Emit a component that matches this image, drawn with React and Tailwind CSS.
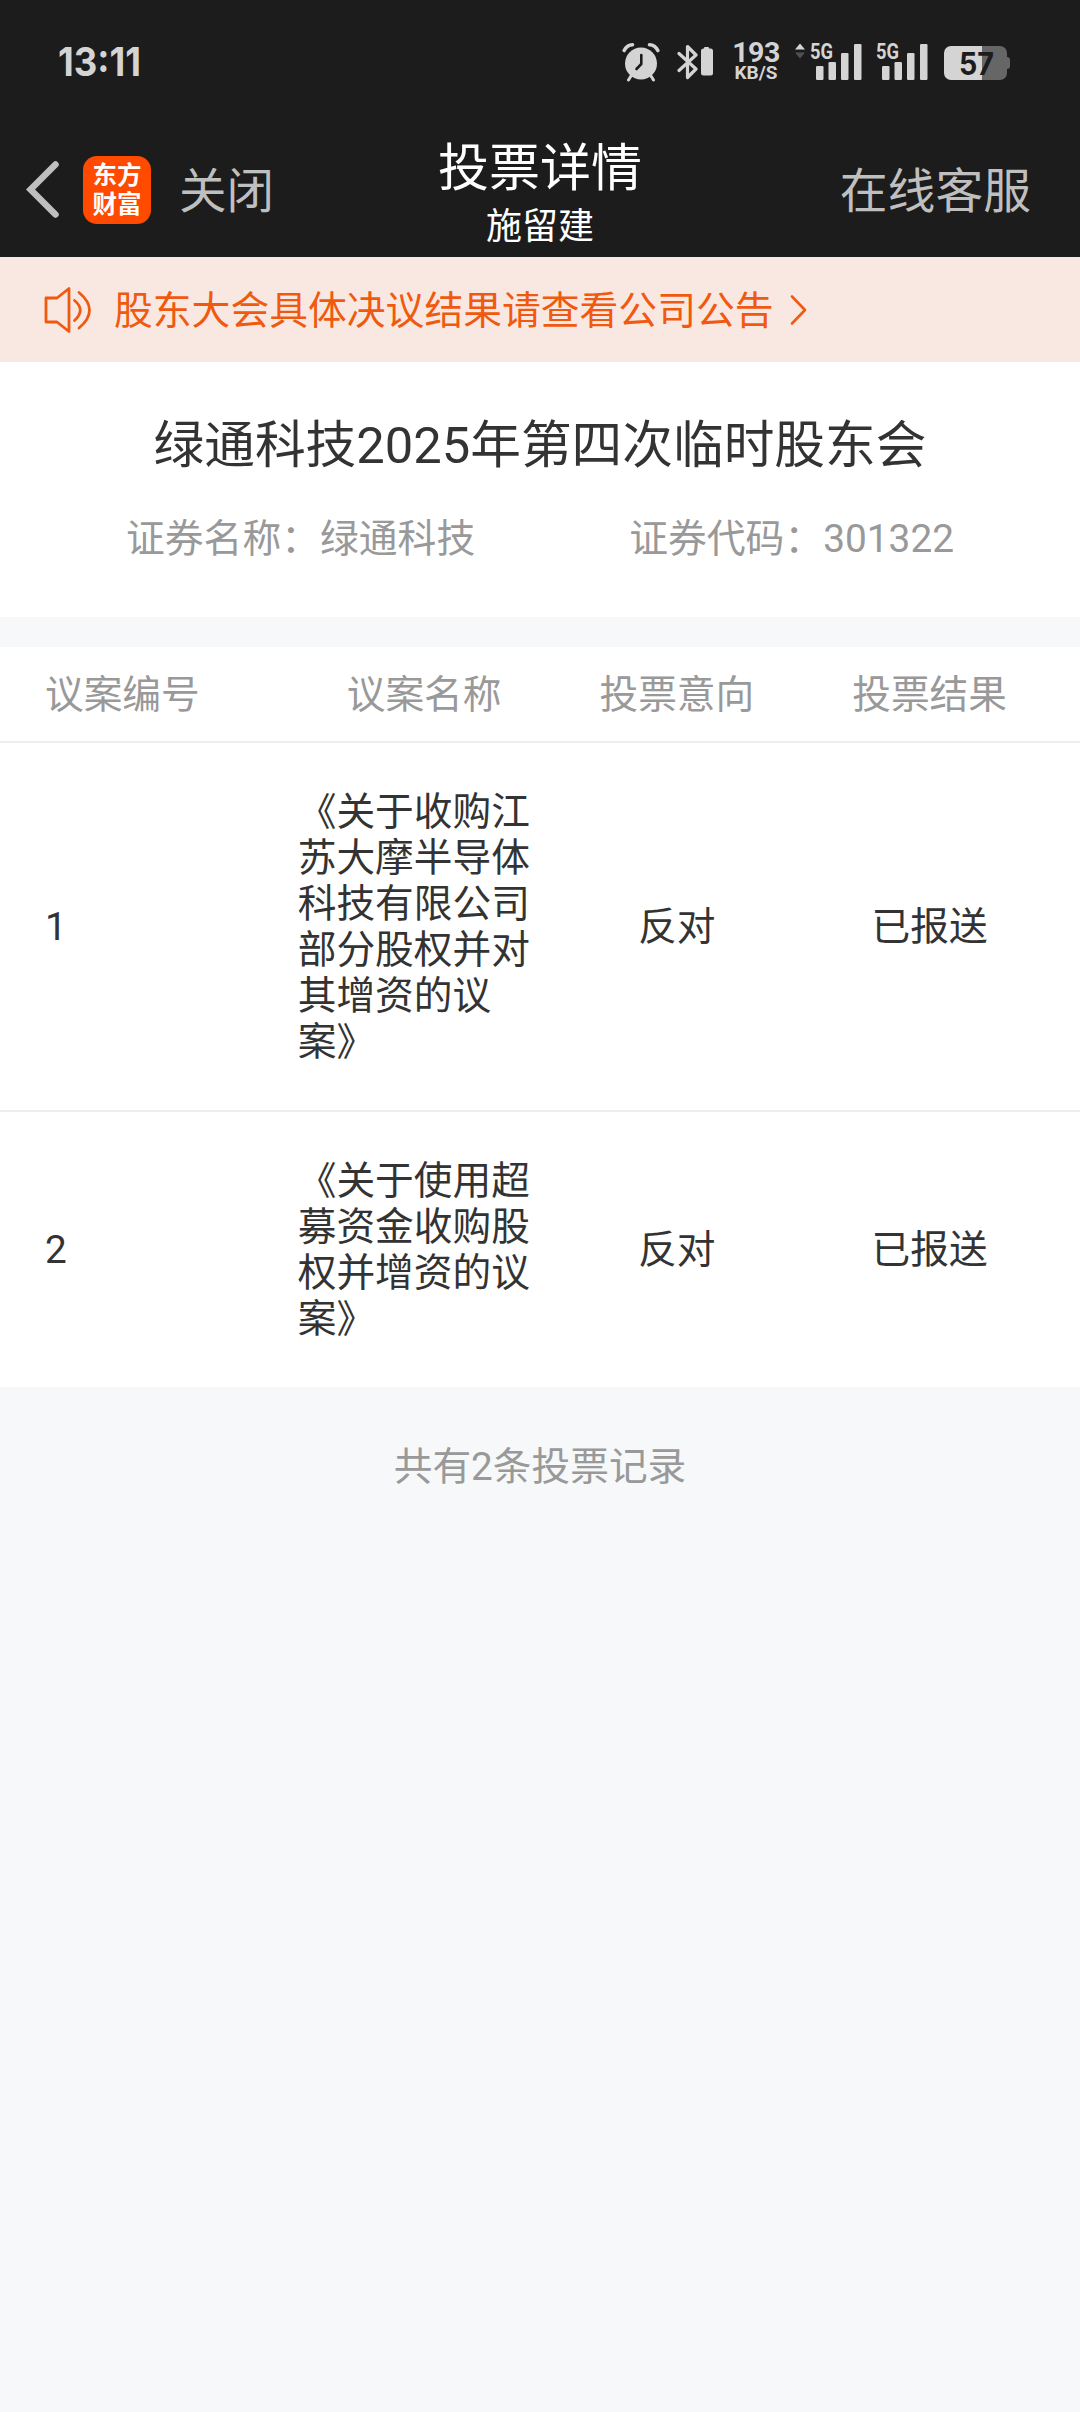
const COLUMNS = ["议案编号", "议案名称", "投票意向", "投票结果"];

const PROPOSALS = [
  {
    id: 1,
    name: "《关于收购江苏大摩半导体科技有限公司部分股权并对其增资的议案》",
    vote: "反对",
    result: "已报送",
  },
  {
    id: 2,
    name: "《关于使用超募资金收购股权并增资的议案》",
    vote: "反对",
    result: "已报送",
  },
];

function AlarmIcon() {
  return (
    <svg className="w-[38px] h-[39px]" viewBox="0 0 38 39" fill="none">
      <path d="M2.200 7.500Q5 2 10.500 1.800M35.800 7.500Q33 2 27.500 1.800" stroke="#d4d4d4" strokeWidth="3.600" strokeLinecap="round" />
      <path d="M9 33L6.500 37M29 33L31.500 37" stroke="#d4d4d4" strokeWidth="3" strokeLinecap="round" />
      <circle cx="19" cy="20.500" r="16" fill="#d4d4d4" />
      <path d="M19.300 12V21L14.500 26" stroke="#1c1c1c" strokeWidth="2.600" strokeLinecap="round" strokeLinejoin="round" />
    </svg>
  );
}

function BluetoothIcon() {
  return (
    <svg className="w-[36px] h-[38px]" viewBox="0 0 36 38" fill="none">
      <path
        d="M2 10.500L19 26L10.500 34.500V3.500L19 12L2 27.500"
        stroke="#d4d4d4"
        strokeWidth="3.200"
        strokeLinecap="round"
        strokeLinejoin="round"
      />
      <rect x="27" y="4" width="5" height="4" rx="1" fill="#d4d4d4" />
      <rect x="24" y="5.500" width="12" height="27" rx="2.500" fill="#d4d4d4" />
    </svg>
  );
}

function SignalIcon() {
  return (
    <svg className="w-[52px] h-[38px] overflow-visible" viewBox="0 0 52 38" fill="#d4d4d4">
      <text x="0" y="16" fontFamily="Roboto" fontWeight="700" fontSize="22" textLength="23" lengthAdjust="spacingAndGlyphs">
        5G
      </text>
      <rect x="6" y="23" width="7.500" height="14" rx="1.200" />
      <rect x="18.500" y="19" width="7.500" height="18" rx="1.200" />
      <rect x="31" y="10" width="7.500" height="27" rx="1.200" />
      <rect x="44" y="1" width="7.500" height="36" rx="1.200" />
    </svg>
  );
}

function BatteryIcon() {
  return (
    <svg className="w-[66px] h-[38px] overflow-visible" viewBox="0 0 66 38">
      <rect x="60" y="14" width="6" height="12" rx="3" fill="#666" />
      <path d="M38 3H56a7 7 0 0 1 7 7V30a7 7 0 0 1-7 7H38z" fill="#666" />
      <path d="M38 3H7a7 7 0 0 0-7 7V30a7 7 0 0 0 7 7H38z" fill="#d4d4d4" />
      <text x="15" y="31.500" fontFamily="Inter" fontWeight="700" fontSize="31" fill="#1c1c1c" textLength="35" lengthAdjust="spacingAndGlyphs">
        57
      </text>
    </svg>
  );
}

function StatusBar() {
  return (
    <div className="flex items-start justify-between h-[120px] pt-[43px] pl-[58px] pr-[70px]">
      <svg className="w-[84px] h-[38px] overflow-visible" viewBox="0 0 84 38">
        <text x="0" y="33" fontFamily="Inter" fontWeight="700" fontSize="40" fill="#d4d4d4" textLength="83" lengthAdjust="spacingAndGlyphs">
          13:11
        </text>
      </svg>
      <div className="flex items-start">
        <AlarmIcon />
        <div className="ml-[17px]">
          <BluetoothIcon />
        </div>
        <div className="flex flex-col items-center w-[48px] ml-[19px] mr-px font-bold text-[#d4d4d4]">
          <span className="text-[28.500px] leading-[20px] tracking-[-0.5px]">193</span>
          <span className="text-[19px] leading-[20px]">KB/S</span>
        </div>
        <svg className="w-[12px] h-[16px] ml-[13px] mr-[4px]" viewBox="0 0 12 16">
          <path d="M6 0.500L11 6.500H1z" fill="#d4d4d4" />
          <path d="M6 15.500L11 9.500H1z" fill="#505050" />
        </svg>
        <SignalIcon />
        <div className="ml-[14px]">
          <SignalIcon />
        </div>
        <div className="ml-[16px]">
          <BatteryIcon />
        </div>
      </div>
    </div>
  );
}

function NavBar() {
  return (
    <div className="grid grid-cols-[1fr_auto_1fr] h-[137px] px-[26px]">
      <div className="flex items-center h-[139px]">
        <svg className="w-[34px] h-[57px]" viewBox="0 0 34 57" fill="none">
          <path d="M29.500 3.500L4.500 28.500L29.500 53.500" stroke="#bfbfbf" strokeWidth="6.500" strokeLinecap="round" />
        </svg>
        <div className="flex flex-col items-center justify-center w-[68px] h-[68px] ml-[23px] rounded-[14px] bg-[#ff4a00] text-white text-[24.500px] leading-[29px] font-bold">
          <span>东方</span>
          <span>财富</span>
        </div>
        <span className="pt-[6px] ml-[28px] text-[47.500px] leading-none text-[#bfbfbf]">关闭</span>
      </div>
      <div className="flex flex-col items-center text-white">
        <h1 className="mt-[22px] text-[51px] leading-[54px]">投票详情</h1>
        <p className="mt-[11px] text-[36px] leading-[40px]">施留建</p>
      </div>
      <div className="flex items-center justify-end h-[139px] pt-[6px] pr-[23px] text-[47.800px] leading-none text-[#bfbfbf]">
        在线客服
      </div>
    </div>
  );
}

function Notice() {
  return (
    <div className="flex items-center h-[105px] pl-[44px] bg-[#f9e8e1] text-[#f05a10]">
      <svg className="w-[48px] h-[48px]" viewBox="0 0 48 48" fill="none" stroke="currentColor" strokeWidth="2.800" strokeLinecap="round" strokeLinejoin="round">
        <path d="M2 12H13L25 2.500V45.500L13 36H2z" />
        <path d="M30.500 14.500Q42 24 30.500 34.500" />
        <path d="M35 6.500Q56 24 35 42" />
      </svg>
      <span className="pt-[3px] ml-[22px] text-[38.800px] leading-none">股东大会具体决议结果请查看公司公告</span>
      <svg className="w-[17px] h-[32px] ml-[16px]" viewBox="0 0 17 32" fill="none">
        <path d="M2 2.500L15 16L2 29.500" stroke="currentColor" strokeWidth="2.600" strokeLinecap="round" strokeLinejoin="round" />
      </svg>
    </div>
  );
}

export default function App() {
  return (
    <div className="w-[1080px] min-h-[2412px] bg-[#f6f8fa] font-['Roboto','Noto_Sans_CJK_SC',sans-serif] text-[#333]">
      <header className="bg-[#1c1c1c]">
        <StatusBar />
        <NavBar />
      </header>
      <Notice />

      {/* 会议信息 */}
      <section className="h-[255px] pt-[54px] bg-white">
        <h2 className="text-center text-[50.700px] leading-[60px]">绿通科技2025年第四次临时股东会</h2>
        <div className="flex justify-between mt-[40px] px-[126px] text-[38.800px] leading-[46px] text-[#999]">
          <span>证券名称：绿通科技</span>
          <span>证券代码：301322</span>
        </div>
      </section>

      {/* 表决明细 */}
      <section className="mt-[30px] bg-white text-[38.700px] leading-[46px]">
        <div className="grid grid-cols-4 items-center h-[96px] pt-[2px] pl-[45px] pr-[24px] border-b-2 border-[#eee] text-center text-[#999]">
          {COLUMNS.map((label) => (
            <span key={label} className="first:text-left">
              {label}
            </span>
          ))}
        </div>
        {PROPOSALS.map((item) => (
          <div
            key={item.id}
            className="grid grid-cols-4 items-center pt-[46px] pb-[45px] pl-[45px] pr-[24px] border-b-2 border-[#eee] last:border-b-0 text-center"
          >
            <span className="text-left">{item.id}</span>
            <span className="w-[240px] text-left">{item.name}</span>
            <span>{item.vote}</span>
            <span>{item.result}</span>
          </div>
        ))}
      </section>

      <p className="mt-[57px] text-center text-[38.700px] leading-[46px] text-[#999]">共有2条投票记录</p>
    </div>
  );
}
